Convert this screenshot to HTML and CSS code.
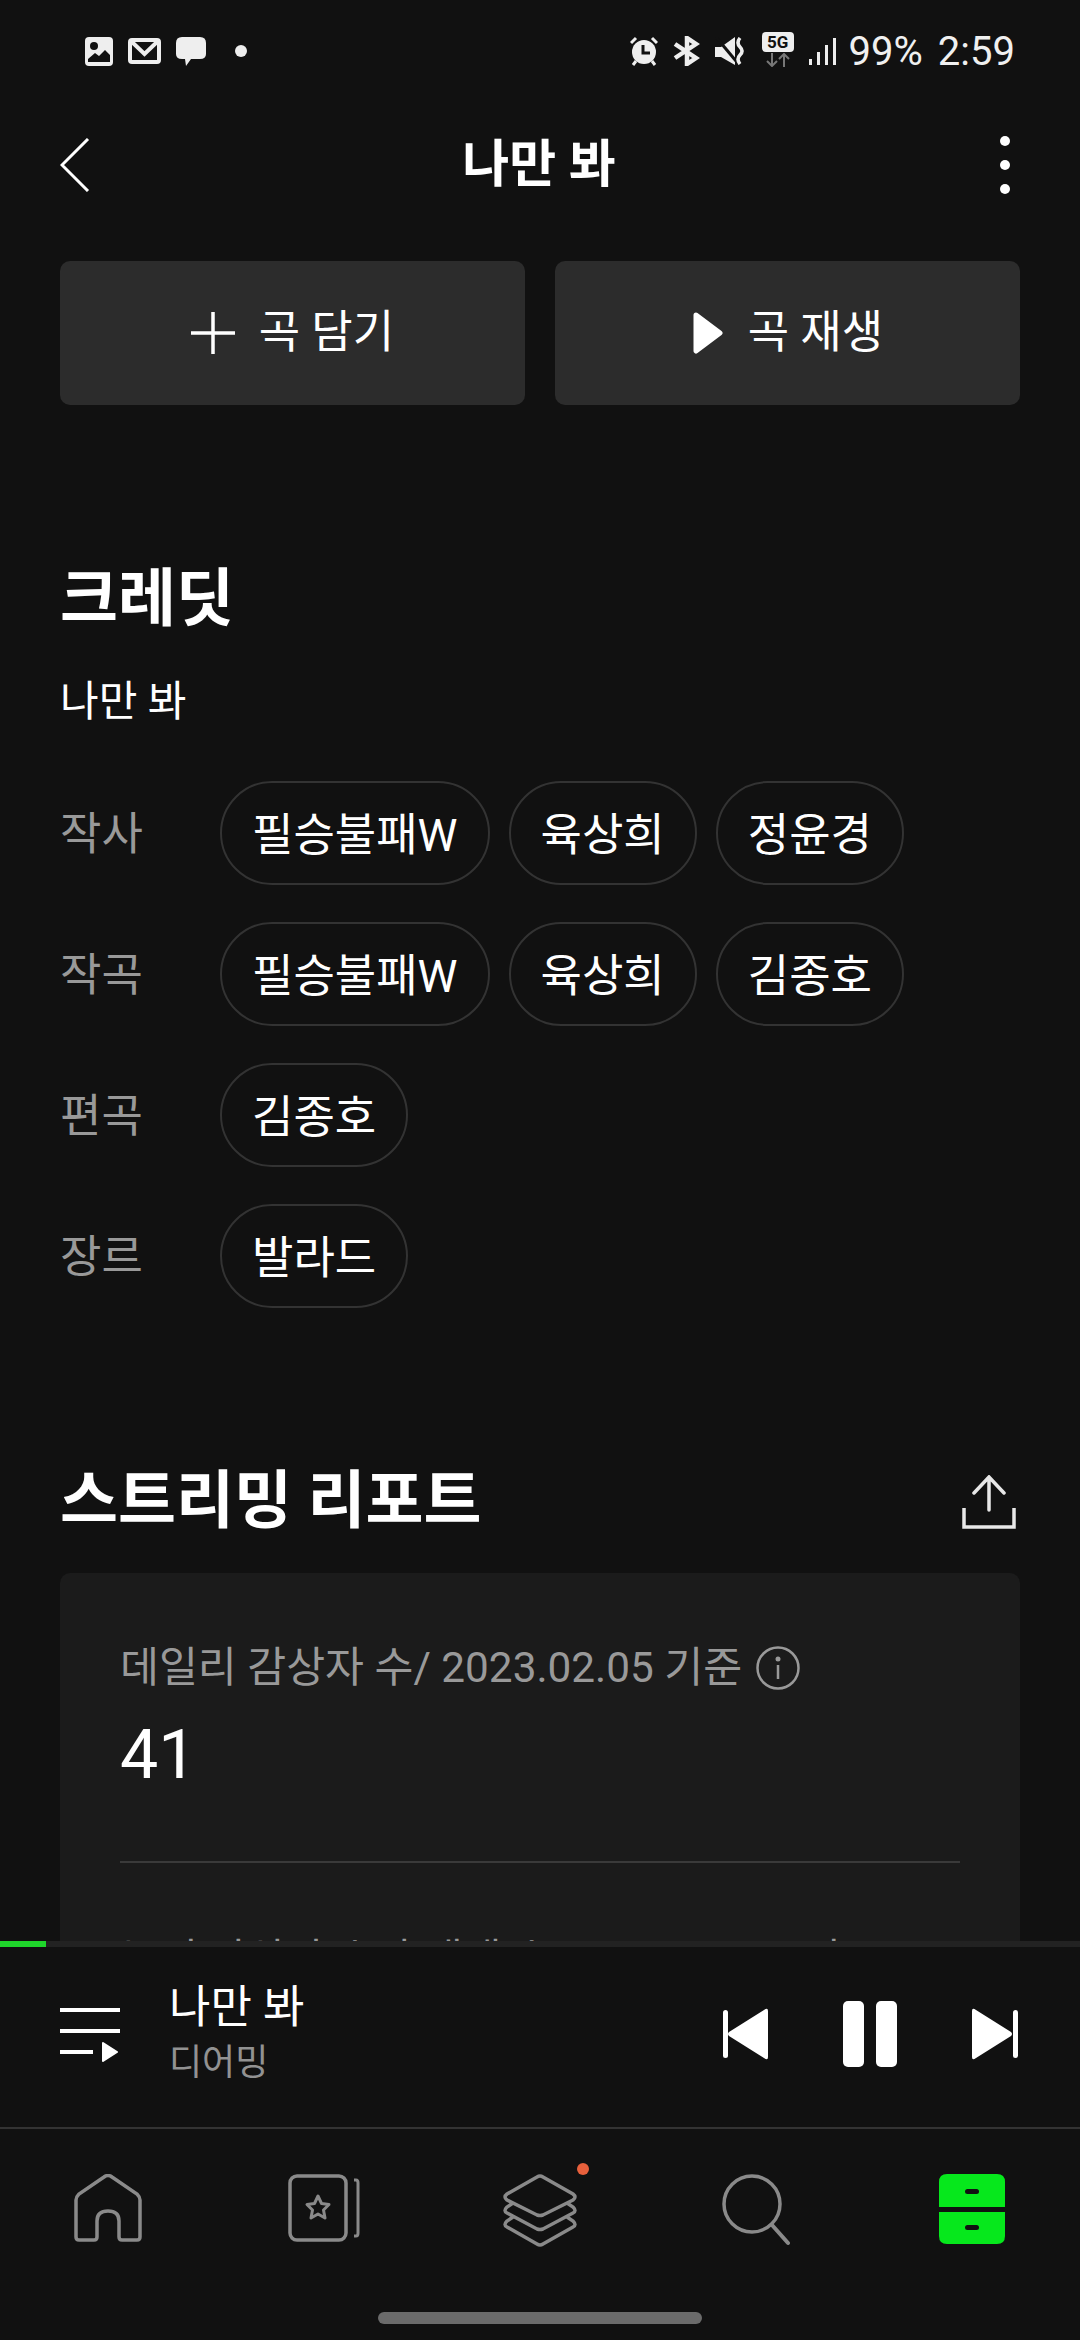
FILE: index.html
```html
<!DOCTYPE html>
<html lang="ko">
<head>
    <meta charset="UTF-8">
    <meta name="viewport" content="width=device-width, initial-scale=1.0">
    <title>나만 봐</title>
    <link rel="stylesheet" href="styles.css">
</head>
<body>
<div class="screen">

    <!-- Status bar -->
    <div class="status">
        <div class="status-left">
            <svg width="28" height="29" viewBox="0 0 28 29"><rect width="28" height="29" rx="4" fill="#eee"/><circle cx="9" cy="9" r="4" fill="#111"/><path d="M3 25 L3 22 L10 16 L14 19 L20 13 L25 18 L25 25 Z" fill="#111"/></svg>
            <svg width="33" height="26" viewBox="0 0 33 26"><rect x="2" y="2" width="29" height="22" rx="2" fill="none" stroke="#eee" stroke-width="4"/><path d="M4 4 L16.500 16 L29 4" fill="none" stroke="#eee" stroke-width="4"/></svg>
            <svg width="30" height="29" viewBox="0 0 30 29"><path d="M6 0 H24 Q30 0 30 6 V17 Q30 22 24 22 H15 L10 29 L9 22 H6 Q0 22 0 17 V6 Q0 0 6 0 Z" fill="#eee"/></svg>
            <span class="status-dot"></span>
        </div>
        <div class="status-right">
            <svg width="28" height="30" viewBox="0 0 28 30"><path d="M1 7 L6 2 M27 7 L22 2" stroke="#eee" stroke-width="3" fill="none"/><circle cx="14" cy="16" r="12" fill="#eee"/><path d="M6 25 L3 29 M22 25 L25 29" stroke="#eee" stroke-width="3"/><path d="M13 9 V17 H20" stroke="#111" stroke-width="3" fill="none"/></svg>
            <svg width="27" height="30" viewBox="0 0 27 30"><path d="M2 8 L23 22 L14 28 V2 L23 8 L2 22" fill="none" stroke="#eee" stroke-width="4.500"/></svg>
            <svg width="29" height="28" viewBox="0 0 29 28"><path d="M0 10 H6 L20 0 V28 L6 20 H0 Z" fill="#eee"/><path d="M1 0 L21 24" stroke="#111" stroke-width="3"/><path d="M25 1 Q21 6 25 10 Q29 14 25 18 Q21 22 25 27" fill="none" stroke="#eee" stroke-width="3.500"/></svg>
            <div class="net">
                <span class="net-box">5G</span>
                <svg width="26" height="14" viewBox="0 0 26 14"><path d="M7 0 V13 M2 8 L7 13 L12 8" fill="none" stroke="#777" stroke-width="2"/><path d="M19 14 V1 M14 6 L19 1 L24 6" fill="none" stroke="#777" stroke-width="2"/></svg>
            </div>
            <svg class="signal" width="28" height="28" viewBox="0 0 28 28"><rect x="0" y="22" width="3" height="6" fill="#eee"/><rect x="8" y="15" width="3" height="13" fill="#eee"/><rect x="16" y="8" width="3" height="20" fill="#eee"/><rect x="24" y="1" width="3" height="27" fill="#eee"/></svg>
            <span class="status-text">99%</span>
            <span class="status-text">2:59</span>
        </div>
    </div>

    <!-- Title bar -->
    <div class="topbar">
        <svg class="back" width="30" height="54" viewBox="0 0 30 54"><path d="M28 1 L2 27 L28 53" fill="none" stroke="#fff" stroke-width="3"/></svg>
        <div class="topbar-title">나만 봐</div>
        <div class="more"><span></span><span></span><span></span></div>
    </div>

    <!-- Scrolling content -->
    <div class="content">
        <div class="actions">
            <button class="action">
                <svg width="44" height="42" viewBox="0 0 44 42"><path d="M22 0 V42 M0 21 H44" stroke="#fff" stroke-width="3.500"/></svg>
                <span class="action-text">곡 담기</span>
            </button>
            <button class="action">
                <svg width="32" height="42" viewBox="0 0 32 42"><path d="M4 3 L28 21 L4 39 Z" fill="#fff" stroke="#fff" stroke-width="5" stroke-linejoin="round"/></svg>
                <span class="action-text">곡 재생</span>
            </button>
        </div>

        <h2 class="section-title credit-title">크레딧</h2>
        <div class="song-name">나만 봐</div>

        <div class="credits">
            <div class="credit-row">
                <div class="credit-label">작사</div>
                <a class="chip">필승불패W</a><a class="chip">육상희</a><a class="chip">정윤경</a>
            </div>
            <div class="credit-row">
                <div class="credit-label">작곡</div>
                <a class="chip">필승불패W</a><a class="chip">육상희</a><a class="chip">김종호</a>
            </div>
            <div class="credit-row">
                <div class="credit-label">편곡</div>
                <a class="chip">김종호</a>
            </div>
            <div class="credit-row">
                <div class="credit-label">장르</div>
                <a class="chip">발라드</a>
            </div>
        </div>

        <div class="report-head">
            <h2 class="section-title">스트리밍 리포트</h2>
            <svg class="share" width="54" height="54" viewBox="0 0 54 54"><path d="M27 2 V35 M12 18 L27 2 L42 18" fill="none" stroke="#e8e8e8" stroke-width="3.500" stroke-linecap="round"/><path d="M2 33 V52 H52 V33" fill="none" stroke="#e8e8e8" stroke-width="3.500"/></svg>
        </div>

        <div class="report-card">
            <div class="stat-label">
                데일리 감상자 수/ 2023.02.05 기준
                <svg width="44" height="44" viewBox="0 0 44 44"><circle cx="22" cy="22" r="20.500" fill="none" stroke="#999" stroke-width="2.500"/><circle cx="22" cy="13" r="2.500" fill="#999"/><path d="M22 19 V33" stroke="#999" stroke-width="2.500"/></svg>
            </div>
            <div class="stat-value">41</div>
            <div class="stat-line"></div>
            <div class="stat-label next-label">누적 감상자 수와 재생 수/ 2023.02.05 기준</div>
        </div>
    </div>

    <!-- Mini player -->
    <div class="progress"><div class="progress-fill" style="width: 4.3%"></div></div>
    <div class="player">
        <svg class="queue" width="60" height="54" viewBox="0 0 60 54"><path d="M0 2 H60 M0 23 H60 M0 44 H33" stroke="#fff" stroke-width="4"/><path d="M43 35 L57 44 L43 53 Z" fill="#fff" stroke="#fff" stroke-width="2" stroke-linejoin="round"/></svg>
        <div class="player-info">
            <div class="player-title">나만 봐</div>
            <div class="player-artist">디어밍</div>
        </div>
        <div class="controls">
            <svg width="45" height="52" viewBox="0 0 45 52"><rect x="0" y="2" width="5" height="48" rx="2.500" fill="#fff"/><path d="M45 3 V49 Q45 53 41 50 L6 28 Q4 26 6 24 L41 2 Q45 -1 45 3 Z" fill="#fff"/></svg>
            <svg width="54" height="66" viewBox="0 0 54 66"><rect x="0" y="0" width="21" height="66" rx="5" fill="#fff"/><rect x="33" y="0" width="21" height="66" rx="5" fill="#fff"/></svg>
            <svg width="46" height="52" viewBox="0 0 46 52"><path d="M0 3 V49 Q0 53 4 50 L39 28 Q41 26 39 24 L4 2 Q0 -1 0 3 Z" fill="#fff"/><rect x="41" y="2" width="5" height="48" rx="2.500" fill="#fff"/></svg>
        </div>
    </div>

    <!-- Bottom navigation -->
    <div class="nav">
        <div class="nav-item">
            <svg width="72" height="68" viewBox="0 0 72 68"><path d="M4 63 V26 Q4 23 7 20 L32 3 Q36 0 40 3 L65 20 Q68 23 68 26 V63 Q68 66 65 66 H50 Q47 66 47 63 V47 Q47 37 36 37 Q25 37 25 47 V63 Q25 66 22 66 H7 Q4 66 4 63 Z" fill="none" stroke="#8a8a8a" stroke-width="3.500"/></svg>
        </div>
        <div class="nav-item">
            <svg width="72" height="68" viewBox="0 0 72 68"><rect x="2" y="2" width="56" height="64" rx="7" fill="none" stroke="#8a8a8a" stroke-width="3.500"/><path d="M30 22 L33.500 29.500 L41 30.500 L35.500 36 L37 44 L30 40 L23 44 L24.500 36 L19 30.500 L26.500 29.500 Z" fill="none" stroke="#8a8a8a" stroke-width="3" stroke-linejoin="round"/><path d="M66 6 H68 Q70 6 70 9 V59 Q70 62 68 62 H66" fill="none" stroke="#8a8a8a" stroke-width="3"/></svg>
        </div>
        <div class="nav-item">
            <svg width="76" height="74" viewBox="0 0 76 74"><path d="M35 3 Q38 1 41 3 L71 20 Q75 23 71 26 L41 41 Q38 42 35 41 L5 26 Q1 23 5 20 Z" fill="none" stroke="#8a8a8a" stroke-width="3.500"/><path d="M11 29 L5 33 Q1 37 5 39 L35 55 Q38 56 41 55 L71 39 Q75 37 71 33 L65 29" fill="none" stroke="#8a8a8a" stroke-width="3.500"/><path d="M11 43 L5 47 Q1 51 5 53 L35 70 Q38 72 41 70 L71 53 Q75 51 71 47 L65 43" fill="none" stroke="#8a8a8a" stroke-width="3.500"/></svg>
            <span class="nav-badge"></span>
        </div>
        <div class="nav-item">
            <svg width="68" height="72" viewBox="0 0 68 72"><circle cx="30" cy="30" r="28" fill="none" stroke="#8a8a8a" stroke-width="3.500"/><path d="M50 51 L66 69" stroke="#8a8a8a" stroke-width="4" stroke-linecap="round"/></svg>
        </div>
        <div class="nav-item">
            <svg width="66" height="70" viewBox="0 0 66 70"><path d="M8 0 H58 Q66 0 66 8 V33 H0 V8 Q0 0 8 0 Z" fill="#06e81c"/><path d="M0 38 H66 V62 Q66 70 58 70 H8 Q0 70 0 62 Z" fill="#06e81c"/><rect x="26" y="15" width="14" height="5" rx="2.500" fill="#111"/><rect x="26" y="51" width="14" height="5" rx="2.500" fill="#111"/></svg>
        </div>
    </div>
    <div class="home-bar"></div>
</div>
</body>
</html>
```

FILE: styles.css
```css
/* Base */
* {
    box-sizing: border-box;
}

body {
    margin: 0;
    background-color: #111;
    color: #fff;
    font-family: Roboto, "Noto Sans CJK KR", sans-serif;
}

.screen {
    display: flex;
    flex-direction: column;
    width: 1080px;
    height: 2340px;
    overflow: hidden;
}

/* Status bar */
.status {
    display: flex;
    flex: none;
    justify-content: space-between;
    align-items: center;
    height: 104px;
    padding: 0 65px 2px 85px;
}

.status-left,
.status-right {
    display: flex;
    align-items: center;
    gap: 15px;
}

.status-dot {
    width: 12px;
    height: 12px;
    margin-left: 14px;
    border-radius: 50%;
    background-color: #eee;
}

.status-text {
    font-size: 40px;
    color: #f0f0f0;
}

.signal {
    margin-right: -3px;
}

.net {
    display: flex;
    flex-direction: column;
    align-items: center;
    gap: 1px;
    margin: -3px 0 0 3px;
}

.net-box {
    width: 32px;
    height: 20px;
    border-radius: 4px;
    background-color: #eee;
    color: #111;
    font-size: 17px;
    font-weight: 700;
    line-height: 20px;
    text-align: center;
}

/* Title bar */
.topbar {
    display: grid;
    flex: none;
    grid-template-columns: 1fr auto 1fr;
    align-items: center;
    height: 118px;
    padding: 3px 70px 0 60px;
}

.topbar-title {
    padding-left: 8px;
    font-size: 51px;
    font-weight: 700;
    line-height: 60px;
}

.more {
    display: flex;
    flex-direction: column;
    justify-self: end;
    gap: 14px;
}

.more span {
    width: 10px;
    height: 10px;
    border-radius: 50%;
    background-color: #fff;
}

/* Content */
.content {
    flex: 1;
    min-height: 0;
    padding: 39px 60px 0;
    overflow: hidden;
}

.actions {
    display: flex;
    gap: 30px;
}

.action {
    display: flex;
    flex: 1;
    justify-content: center;
    align-items: center;
    gap: 24px;
    height: 144px;
    padding: 0;
    border: none;
    border-radius: 10px;
    background-color: #2c2c2c;
    color: #fff;
    font-family: inherit;
    font-size: 45px;
}

.action-text {
    margin-bottom: 10px;
}

.section-title {
    margin: 0;
    font-size: 63px;
    font-weight: 700;
    line-height: 80px;
}

.credit-title {
    margin-top: 154px;
}

.song-name {
    margin-top: 33px;
    font-size: 42px;
    line-height: 60px;
}

.credits {
    display: flex;
    flex-direction: column;
    gap: 37px;
    margin-top: 49px;
}

.credit-row {
    display: flex;
    align-items: center;
    gap: 19px;
}

.credit-label {
    width: 141px;
    margin-bottom: 6px;
    color: #999;
    font-size: 45px;
}

.chip {
    display: flex;
    align-items: center;
    height: 104px;
    padding: 0 30px 4px;
    border: 2px solid #333;
    border-radius: 52px;
    font-size: 45px;
}

.report-head {
    display: flex;
    justify-content: space-between;
    align-items: center;
    margin-top: 153px;
}

.share {
    margin: 2px 4px 0 0;
}

.report-card {
    height: 600px;
    margin-top: 32px;
    padding: 65px 60px 0;
    border-radius: 10px;
    background-color: #1b1b1b;
}

.stat-label {
    display: flex;
    align-items: center;
    gap: 14px;
    color: #999;
    font-size: 42.3px;
    line-height: 60px;
    white-space: nowrap;
}

.stat-value {
    margin-top: 17px;
    font-size: 68px;
    line-height: 80px;
}

.stat-line {
    height: 2px;
    margin-top: 66px;
    background-color: #3a3a3a;
}

.next-label {
    margin-top: 67px;
}

/* Mini player */
.progress {
    flex: none;
    height: 6px;
    background-color: #222;
}

.progress-fill {
    height: 100%;
    background-color: #1fd62b;
}

.player {
    display: flex;
    flex: none;
    align-items: center;
    height: 182px;
    padding: 0 62px 0 60px;
    border-bottom: 2px solid #333;
}

.queue {
    margin-bottom: 4px;
}

.player-info {
    margin: 0 0 8px 49px;
}

.player-title {
    font-size: 45px;
    line-height: 60px;
}

.player-artist {
    color: #929292;
    font-size: 36px;
    line-height: 50px;
}

.controls {
    display: flex;
    align-items: center;
    gap: 75px;
    margin: 0 0 6px auto;
}

/* Bottom navigation */
.nav {
    display: grid;
    flex: none;
    grid-template-columns: repeat(5, 1fr);
    height: 183px;
    padding-top: 45px;
}

.nav-item {
    position: relative;
    display: flex;
    justify-content: center;
}

.nav-badge {
    position: absolute;
    top: -11px;
    left: 145px;
    width: 12px;
    height: 12px;
    border-radius: 50%;
    background-color: #e8603c;
}

.home-bar {
    flex: none;
    width: 324px;
    height: 12px;
    margin: 0 auto 16px;
    border-radius: 6px;
    background-color: #6b6b6b;
}
```
